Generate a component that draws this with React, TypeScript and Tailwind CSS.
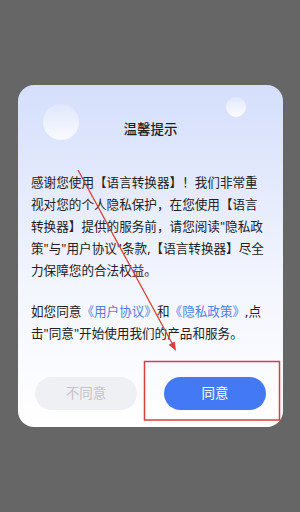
import React from "react";

const App = () => {
  return (
    <div
      className="relative w-[300px] h-[512px] bg-[#666666] pt-[85px] pl-[18px] overflow-hidden"
      style={{ fontFamily: '"Noto Sans", "Noto Sans CJK SC", sans-serif' }}
    >
      <div className="relative w-[265px] h-[342px] rounded-[16px] overflow-hidden bg-gradient-to-b from-[#d5dffc] via-[#f4f6fe] via-60% to-white">
        {/* bubbles */}
        <div className="absolute left-[25px] top-[19px] w-[36px] h-[36px] rounded-full bg-gradient-to-b from-white/20 to-white/80" />
        <div className="absolute left-[208px] top-[12px] w-[20px] h-[20px] rounded-full bg-gradient-to-b from-white/30 to-white/90" />

        <div className="relative flex flex-col">
          <h2 className="pt-[35px] text-center text-[13.5px] leading-[18px] font-medium text-[#1f1f1f]">
            温馨提示
          </h2>

          <div className="mt-[34px] px-[13px] text-[12.6px] leading-[22px] text-[#222222]">
            <p className="w-[236px]">
              感谢您使用【语言转换器】！我们非常重视对您的个人隐私保护，在您使用【语言转换器】提供的服务前，请您阅读"隐私政策"与"用户协议"条款,【语言转换器】尽全力保障您的合法权益。
            </p>
            <p className="w-[236px] mt-[19px]">
              如您同意<span className="text-[#4f7fe6]">《用户协议》</span>和<span className="text-[#4f7fe6]">《隐私政策》</span>,点击"同意"开始使用我们的产品和服务。
            </p>
          </div>

          <div className="mt-[32px] px-[17px] flex justify-between">
            <button className="w-[102px] h-[33px] rounded-full bg-[#eff0f4] text-[13.5px] text-[#c3c4ca]">
              不同意
            </button>
            <button className="w-[102px] h-[33px] rounded-full bg-[#4479f6] text-[13.5px] text-white">
              同意
            </button>
          </div>
        </div>
      </div>

      {/* red annotation */}
      <svg
        className="absolute inset-0 pointer-events-none"
        width="300"
        height="512"
        viewBox="0 0 300 512"
      >
        <line x1="78" y1="170" x2="172.5" y2="344" stroke="#d8413b" strokeWidth="1.3" />
        <polygon points="176,351 168.6,344.8 174.8,341.4" fill="#d8413b" />
        <rect x="144.5" y="361.5" width="135" height="58.5" fill="none" stroke="#d8413b" strokeWidth="1.5" />
      </svg>
    </div>
  );
};

export default App;
